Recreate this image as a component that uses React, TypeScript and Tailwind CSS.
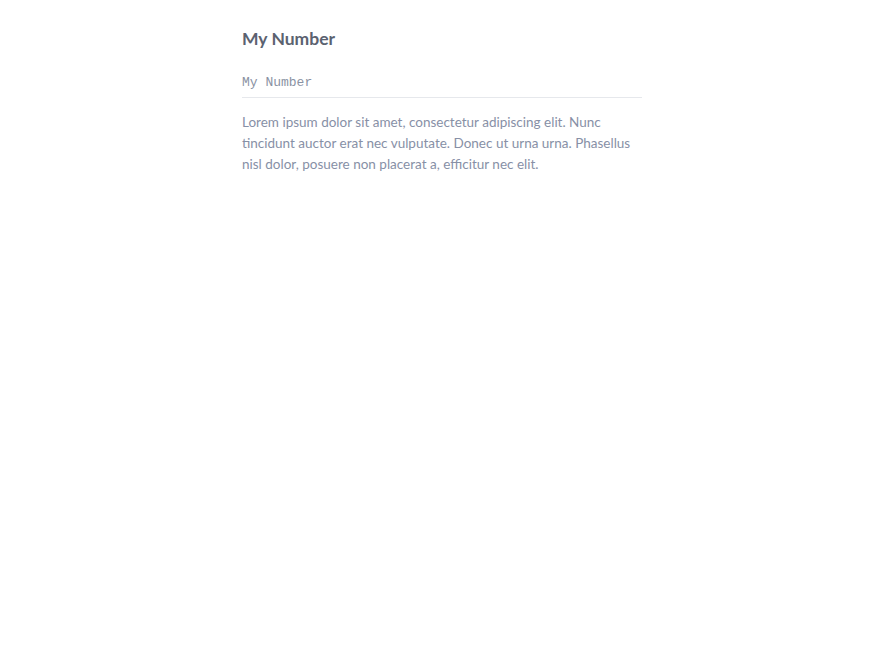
export default function App() {
  return (
    <div className="min-h-screen bg-white font-['Lato','Liberation_Sans',sans-serif]">
      <div className="mx-auto w-[400px] pt-[26px]">
        <h1 className="text-[17.5px] font-bold leading-[26px] text-[#5b6270]">My Number</h1>
        <div className="mt-[22px] border-b border-[#e6e8ec] pb-[5px] font-['Liberation_Mono',monospace] text-[13px] leading-[18px] text-[#8a92a3]">
          My Number
        </div>
        <p className="mt-[14px] text-[13.5px] leading-[21px] text-[#8790a6]">
          Lorem ipsum dolor sit amet, consectetur adipiscing elit. Nunc tincidunt auctor erat nec
          vulputate. Donec ut urna urna. Phasellus nisl dolor, posuere non placerat a, efficitur
          nec elit.
        </p>
      </div>
    </div>
  )
}
